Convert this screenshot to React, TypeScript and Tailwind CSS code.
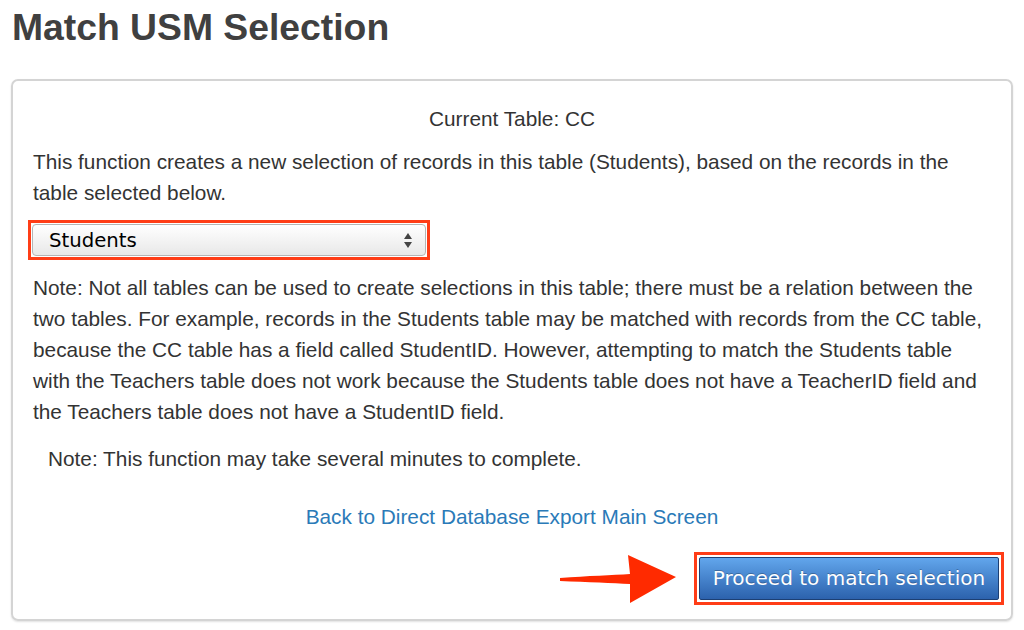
import React from "react";

export default function App() {
  return (
    <div className="w-[1024px] h-[630px] bg-white overflow-hidden" style={{ fontFamily: '"Liberation Sans", Arial, sans-serif' }}>
      <h1 className="pl-[12px] pt-[5px] text-[37.3px] leading-[44px] font-bold text-[#404040]">Match USM Selection</h1>
      <div className="mt-[30px] ml-[11px] w-[1002px] h-[542px] border-2 border-[#d4d4d4] rounded-[7px] shadow-[0_1px_2px_rgba(0,0,0,0.12)] pl-[20px] pr-[20px] pt-[22px] text-[20.8px] leading-[31px] text-[#333333]">
        <p className="text-center">Current Table: CC</p>
        <p className="mt-[12px] pr-[8px]">This function creates a new selection of records in this table (Students), based on the records in the table selected below.</p>
        <div className="mt-[12px] -ml-[5px] w-[402px] h-[40px] border-[3px] border-[#ff3d17] p-[1px]">
          <div className="h-full rounded-[4px] border border-[#b5b5b5] bg-gradient-to-b from-[#ffffff] to-[#e8e8e8] flex items-center justify-between pl-[16px] pr-[12px]">
            <span className="text-[19.7px] text-black" style={{ fontFamily: '"DejaVu Sans", sans-serif' }}>Students</span>
            <svg width="10" height="20" viewBox="0 0 10 20">
              <polygon points="5,3 9,9 1,9" fill="#444" />
              <polygon points="1,12 9,12 5,18" fill="#444" />
            </svg>
          </div>
        </div>
        <p className="mt-[12px] pr-[8px]">Note: Not all tables can be used to create selections in this table; there must be a relation between the two tables. For example, records in the Students table may be matched with records from the CC table, because the CC table has a field called StudentID. However, attempting to match the Students table with the Teachers table does not work because the Students table does not have a TeacherID field and the Teachers table does not have a StudentID field.</p>
        <p className="mt-[16px] pl-[15px]">Note: This function may take several minutes to complete.</p>
        <p className="mt-[27px] text-center text-[#2a7ab8]">Back to Direct Database Export Main Screen</p>
        <div className="mt-[20px] flex justify-end items-center gap-[16px] -mr-[13px]">
          <svg width="120" height="50" viewBox="0 0 120 50">
            <path d="M2,24 C30,22 55,21 72,20 L70,1 L118,23 L72,49 L72,30 C55,29 30,28 2,27 Z" fill="#ff2a00" />
          </svg>
          <div className="w-[310px] h-[53px] border-[3px] border-[#ff3d17] p-[2px]">
            <div className="h-full rounded-[2px] border border-[#1d3f73] bg-gradient-to-b from-[#62a6ec] to-[#2c62ad] flex items-center justify-center">
              <span className="text-white text-[20px]" style={{ fontFamily: '"DejaVu Sans", sans-serif', textShadow: "0 -1px 0 rgba(0,0,0,0.25)" }}>Proceed to match selection</span>
            </div>
          </div>
        </div>
      </div>
    </div>
  );
}
